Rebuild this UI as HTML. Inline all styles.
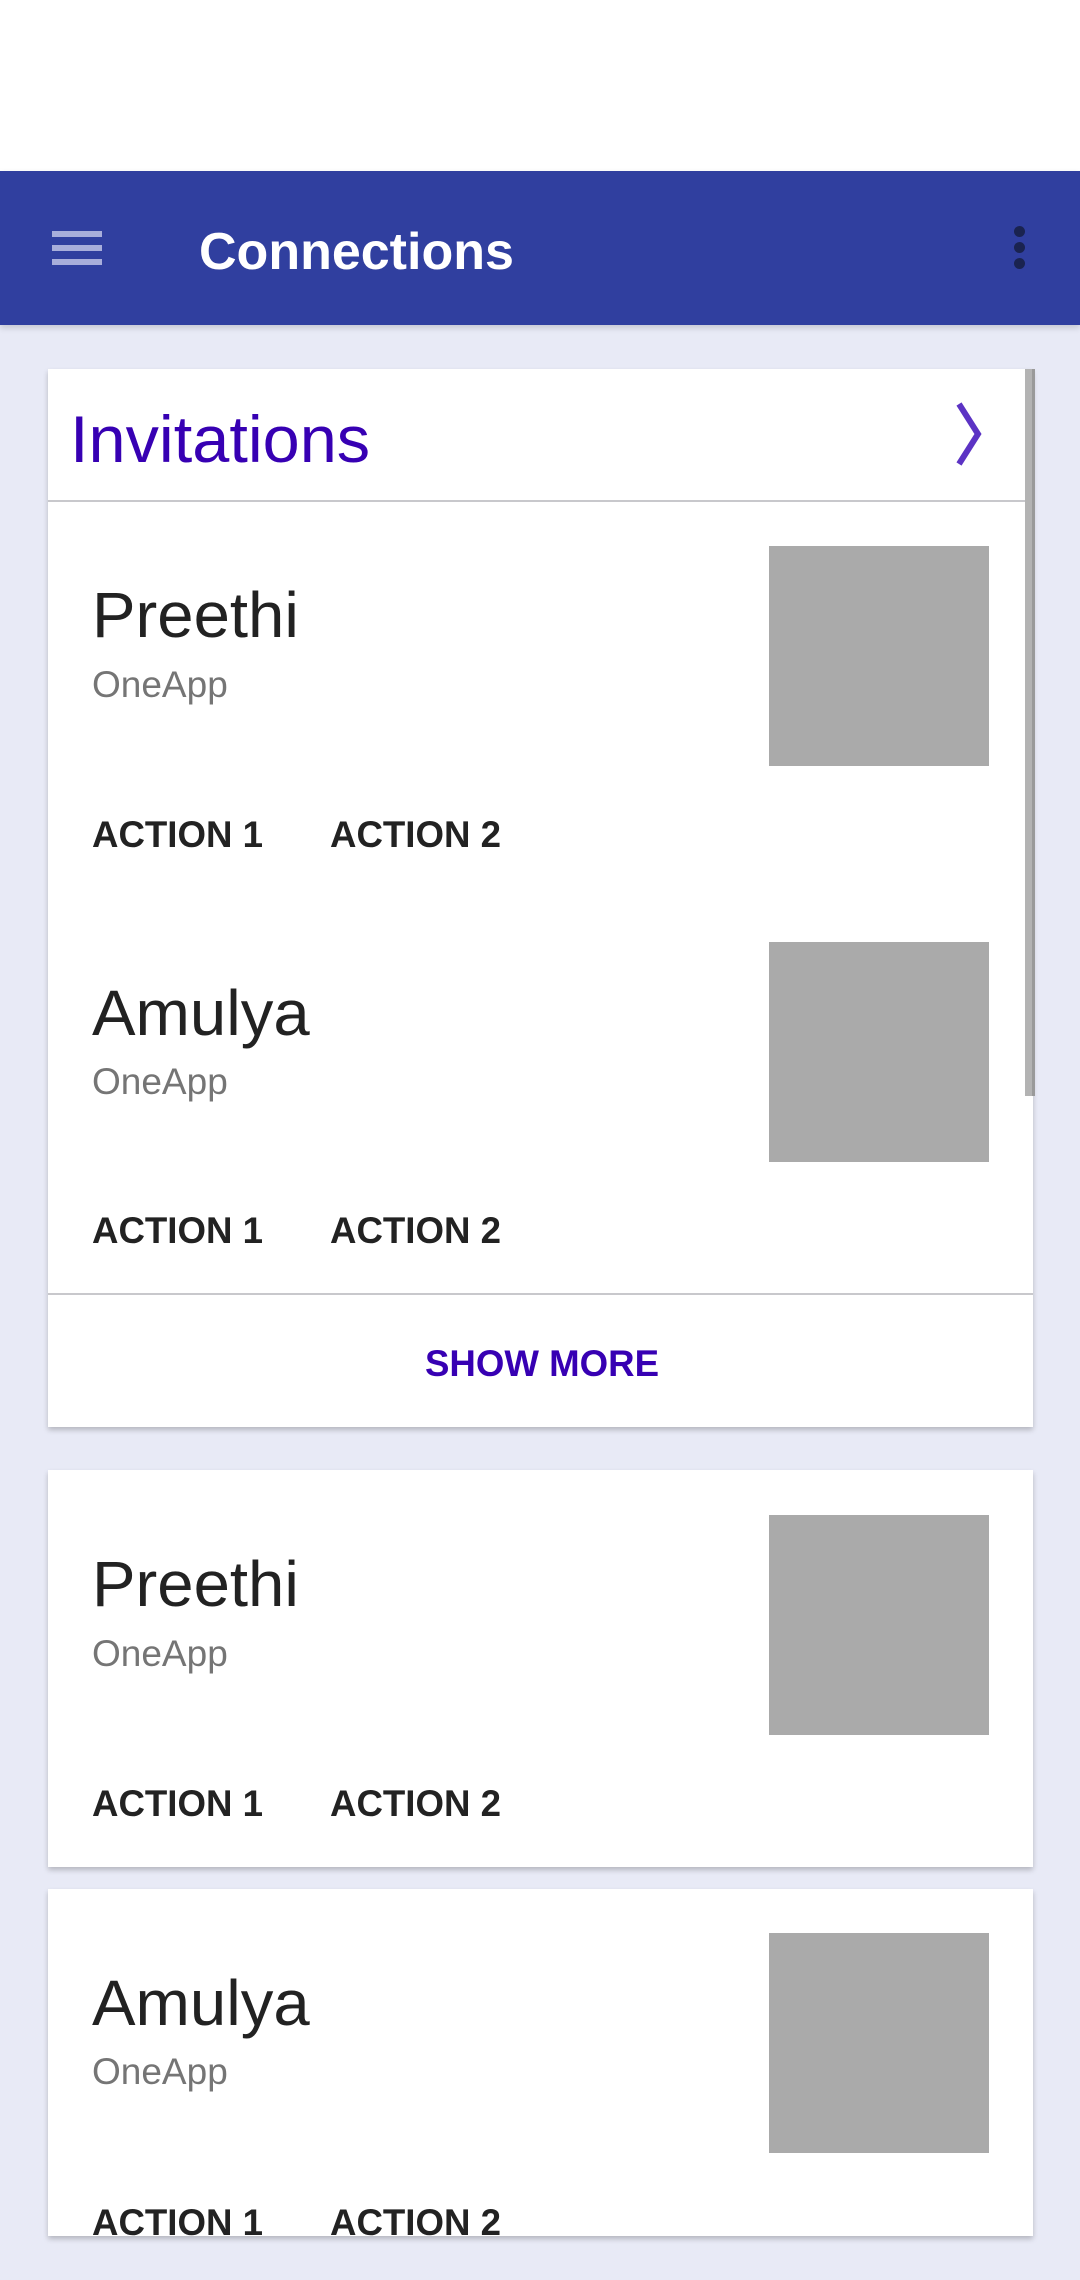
<!DOCTYPE html>
<html><head><meta charset="utf-8"><style>
*{margin:0;padding:0;box-sizing:border-box}
body{width:1080px;height:2280px;position:relative;overflow:hidden;background:#e8eaf6;font-family:"Liberation Sans",sans-serif}
.a{position:absolute;white-space:nowrap;line-height:1}
.card{position:absolute;left:48px;width:985px;background:#fff;box-shadow:0 3px 5px rgba(0,0,0,0.22)}
.img{position:absolute;left:769px;width:220px;height:220px;background:#aaaaaa}
.name{font-size:64px;color:#222;left:92px;transform:scaleX(1.02);transform-origin:left}
.sub{font-size:37px;color:#757575;left:92px}
.act{font-size:37px;color:#222;font-weight:bold;transform:scaleX(0.99);transform-origin:left}
</style></head><body>
<div class="a" style="left:0;top:0;width:1080px;height:171px;background:#fff"></div>
<div class="a" style="left:0;top:171px;width:1080px;height:154px;background:#303f9f;box-shadow:0 3px 6px rgba(0,0,0,0.15)"></div>
<div class="a" style="left:52px;top:231px;width:50px;height:6px;background:#a8aedb"></div>
<div class="a" style="left:52px;top:245px;width:50px;height:6px;background:#a8aedb"></div>
<div class="a" style="left:52px;top:259px;width:50px;height:6px;background:#a8aedb"></div>
<div class="a" style="left:1014px;top:226px;width:11px;height:11px;border-radius:50%;background:#1a2350"></div>
<div class="a" style="left:1014px;top:242px;width:11px;height:11px;border-radius:50%;background:#1a2350"></div>
<div class="a" style="left:1014px;top:258px;width:11px;height:11px;border-radius:50%;background:#1a2350"></div>
<div class="a" style="left:199px;top:226px;font-size:52px;color:#fff;font-weight:bold">Connections</div>

<div class="card" style="top:369px;height:1058px"></div>
<div class="a" style="left:48px;top:500px;width:985px;height:2px;background:#c8c8cc"></div>
<div class="a" style="left:48px;top:1293px;width:985px;height:2px;background:#c8c8cc"></div>
<div class="a" style="left:70px;top:406px;font-size:66px;color:#3700b3;transform:scaleX(1.01);transform-origin:left">Invitations</div>
<svg class="a" style="left:950px;top:398px" width="40" height="74"><path d="M9 6 L28 36 L9 66" fill="none" stroke="#5c33c4" stroke-width="6"/></svg>
<div class="a" style="left:1025px;top:369px;width:10px;height:727px;background:#b3b3b3;border-right:3px solid #9a9a9a"></div>

<div class="img" style="top:546px"></div>
<div class="a name" style="top:583px">Preethi</div>
<div class="a sub" style="top:666px">OneApp</div>
<div class="a act" style="left:92px;top:816px">ACTION 1</div>
<div class="a act" style="left:330px;top:816px">ACTION 2</div>

<div class="img" style="top:942px"></div>
<div class="a name" style="top:981px">Amulya</div>
<div class="a sub" style="top:1063px">OneApp</div>
<div class="a act" style="left:92px;top:1212px">ACTION 1</div>
<div class="a act" style="left:330px;top:1212px">ACTION 2</div>
<div class="a act" style="left:425px;top:1345px;color:#3700b3">SHOW MORE</div>

<div class="card" style="top:1470px;height:397px"></div>
<div class="img" style="top:1515px"></div>
<div class="a name" style="top:1552px">Preethi</div>
<div class="a sub" style="top:1635px">OneApp</div>
<div class="a act" style="left:92px;top:1785px">ACTION 1</div>
<div class="a act" style="left:330px;top:1785px">ACTION 2</div>

<div class="card" style="top:1889px;height:347px;overflow:hidden">
<div class="img" style="top:44px;left:721px"></div>
<div class="a name" style="left:44px;top:82px">Amulya</div>
<div class="a sub" style="left:44px;top:164px">OneApp</div>
<div class="a act" style="left:44px;top:315px">ACTION 1</div>
<div class="a act" style="left:282px;top:315px">ACTION 2</div>
</div>
</body></html>
